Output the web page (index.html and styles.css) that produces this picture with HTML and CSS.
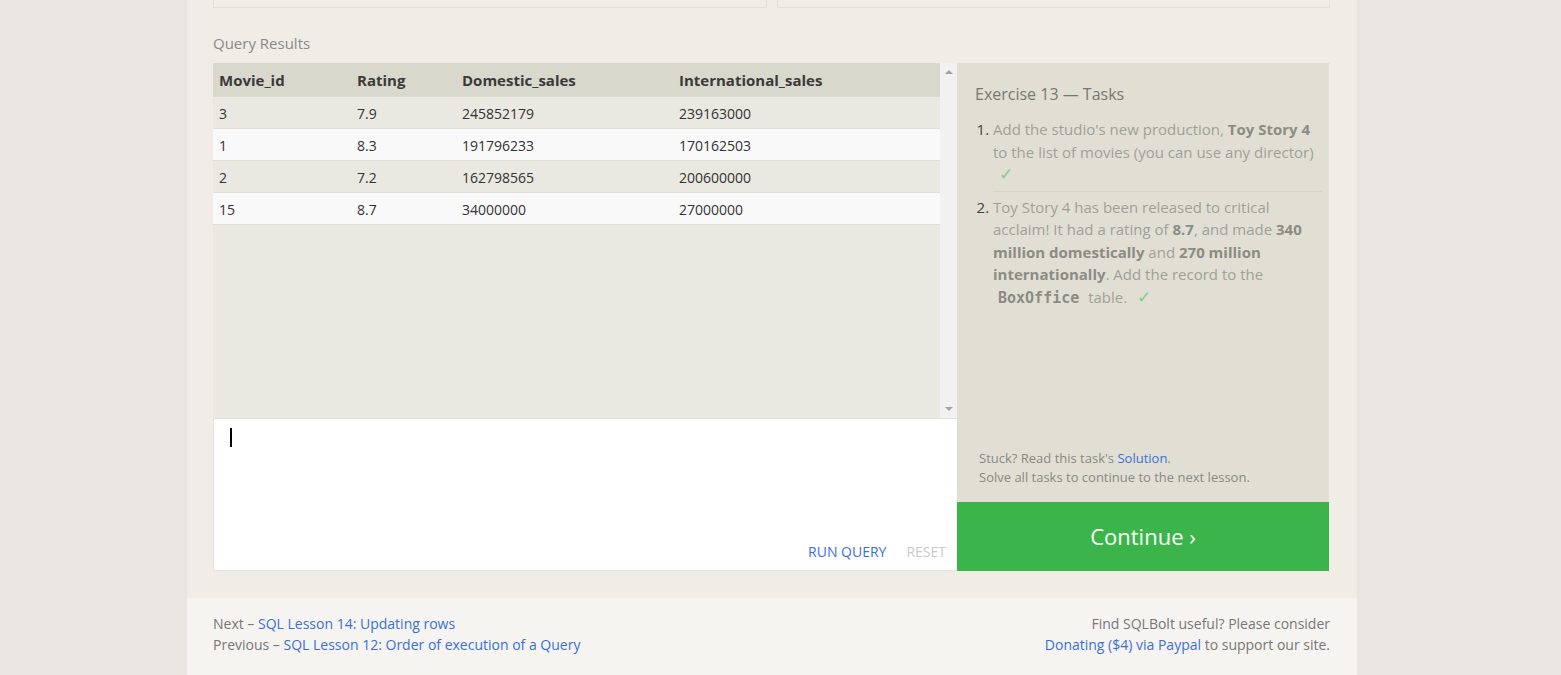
FILE: index.html
```html
<!DOCTYPE html>
<html>
<head>
<meta charset="utf-8">
<link rel="stylesheet" href="styles.css">
</head>
<body>
<div class="page">
  <div class="main">
    <div class="topboxes">
      <div class="tbox"></div>
      <div class="tbox"></div>
    </div>
    <div class="label">Query Results</div>
    <div class="workspace">
      <div class="leftcol">
        <div class="results">
          <div class="tablewrap">
            <table class="rtable">
              <thead>
                <tr><th class="c1">Movie_id</th><th class="c2">Rating</th><th class="c3">Domestic_sales</th><th>International_sales</th></tr>
              </thead>
              <tbody>
                <tr class="odd"><td>3</td><td>7.9</td><td>245852179</td><td>239163000</td></tr>
                <tr class="even"><td>1</td><td>8.3</td><td>191796233</td><td>170162503</td></tr>
                <tr class="odd"><td>2</td><td>7.2</td><td>162798565</td><td>200600000</td></tr>
                <tr class="even"><td>15</td><td>8.7</td><td>34000000</td><td>27000000</td></tr>
              </tbody>
            </table>
          </div>
          <div class="scrollbar">
            <div class="arrow-up"></div>
            <div class="arrow-down"></div>
          </div>
        </div>
        <div class="editor">
          <div class="cursor"></div>
          <div class="actions">
            <span class="run">RUN QUERY</span>
            <span class="reset">RESET</span>
          </div>
        </div>
      </div>
      <div class="rightcol">
        <div class="tasks">
          <div class="ttitle">Exercise 13 — Tasks</div>
          <ol class="tlist">
            <li>Add the studio's new production, <b>Toy Story 4</b> to the list of movies (you can use any director) <span class="check">✓</span></li>
            <li>Toy Story 4 has been released to critical acclaim! It had a rating of <b>8.7</b>, and made <b>340 million domestically</b> and <b>270 million internationally</b>. Add the record to the <code>BoxOffice</code> table. <span class="check">✓</span></li>
          </ol>
          <div class="stuck">
            <div>Stuck? Read this task's <a class="link">Solution</a>.</div>
            <div>Solve all tasks to continue to the next lesson.</div>
          </div>
        </div>
        <div class="continue">Continue ›</div>
      </div>
    </div>
  </div>
  <div class="footer">
    <div class="fleft">
      <div>Next – <a class="link">SQL Lesson 14: Updating rows</a></div>
      <div>Previous – <a class="link">SQL Lesson 12: Order of execution of a Query</a></div>
    </div>
    <div class="fright">
      <div>Find SQLBolt useful? Please consider</div>
      <div><a class="link">Donating ($4) via Paypal</a> to support our site.</div>
    </div>
  </div>
</div>
</body>
</html>
```

FILE: styles.css
```css
html, body {
  margin: 0;
  padding: 0;
}
body {
  background: #e9e6e2;
  font-family: "Open Sans", "Liberation Sans", sans-serif;
  height: 675px;
  overflow: hidden;
}
.page {
  width: 1170px;
  margin-left: 187px;
  background: #efede6;
}
.main {
  padding: 0 27px 27px 26px;
}
.topboxes {
  display: flex;
  gap: 10px;
}
.tbox {
  flex: 1;
  height: 7px;
  border: 1px solid #e2e0d8;
  border-top: none;
}
.label {
  margin-top: 25px;
  margin-bottom: 10px;
  font-size: 15px;
  line-height: 20px;
  color: #8a8a8a;
}
.workspace {
  display: flex;
  height: 508px;
}
.leftcol {
  width: 744px;
  display: flex;
  flex-direction: column;
}
.results {
  height: 355px;
  display: flex;
  background: #eae9e1;
}
.tablewrap {
  flex: 1;
}
.rtable {
  width: 100%;
  border-collapse: collapse;
  font-size: 14px;
  color: #333;
}
.rtable th {
  background: #d9d8cc;
  text-align: left;
  font-weight: 700;
  font-size: 15px;
  height: 34px;
  padding: 0 6px;
  color: #3a3a3a;
}
.rtable td {
  height: 29px;
  padding: 2px 6px 0 6px;
  border-bottom: 1px solid #e0dfd7;
}
.rtable .c1 { width: 126px; }
.rtable .c2 { width: 93px; }
.rtable .c3 { width: 205px; }
.odd { background: #eae9e1; }
.even { background: #f9f9f9; }
.scrollbar {
  width: 17px;
  background: #f1f1f1;
  display: flex;
  flex-direction: column;
  justify-content: space-between;
  align-items: center;
  padding: 7px 0;
  box-sizing: border-box;
}
.arrow-up {
  width: 0; height: 0;
  border-left: 4px solid transparent;
  border-right: 4px solid transparent;
  border-bottom: 4px solid #a3a3a3;
}
.arrow-down {
  width: 0; height: 0;
  border-left: 4px solid transparent;
  border-right: 4px solid transparent;
  border-top: 4px solid #a3a3a3;
}
.editor {
  flex: 1;
  background: #fff;
  border-left: 1px solid #e3e1d9;
  border-bottom: 1px solid #e3e1d9;
  border-top: 1px solid #e3e1d9;
  display: flex;
  flex-direction: column;
  justify-content: space-between;
  padding: 9px 0 0 16px;
}
.cursor {
  width: 2px;
  height: 19px;
  background: #000;
}
.actions {
  display: flex;
  justify-content: flex-end;
  gap: 20px;
  padding-right: 11px;
  font-size: 14px;
  line-height: 20px;
  padding-bottom: 8px;
}
.run { color: #3b6fd8; }
.reset { color: #c9c9c9; }
.rightcol {
  width: 372px;
  display: flex;
  flex-direction: column;
}
.tasks {
  flex: 1;
  background: #e1dfd3;
  padding: 20px 7px 15px 18px;
  display: flex;
  flex-direction: column;
}
.ttitle {
  font-size: 16px;
  line-height: 22px;
  color: #777;
}
.tlist {
  margin: 13px 0 0 0;
  padding-left: 18px;
  font-size: 15px;
  line-height: 22.5px;
  color: #a09f9a;
}
.tlist li {
  padding: 0 0 5px 0;
}
.tlist li + li {
  border-top: 1px solid #d6d4c9;
  padding-top: 4px;
}
.tlist li::marker {
  color: #444;
}
.tlist b {
  color: #8c8b86;
}
.tlist code {
  font-family: "DejaVu Sans Mono", "Liberation Mono", monospace;
  font-weight: 700;
  font-size: 15px;
  color: #8c8b86;
  padding: 0 5px;
}
.check {
  font-family: "DejaVu Sans", sans-serif;
  font-size: 17px;
  color: #7fcf8a;
  margin-left: 6px;
}
.stuck {
  margin-top: auto;
  font-size: 13px;
  line-height: 19px;
  color: #888;
  padding-left: 4px;
}
.link {
  color: #3b6fd8;
  text-decoration: none;
}
.continue {
  height: 69px;
  background: #3bb54a;
  color: #fff;
  font-size: 22px;
  display: flex;
  align-items: center;
  justify-content: center;
  padding-bottom: 1px;
  box-sizing: border-box;
}
.footer {
  background: #f5f4f0;
  display: flex;
  justify-content: space-between;
  padding: 15px 27px 40px 26px;
  font-size: 14px;
  line-height: 21px;
  color: #777;
}
.fright {
  text-align: right;
}
```
